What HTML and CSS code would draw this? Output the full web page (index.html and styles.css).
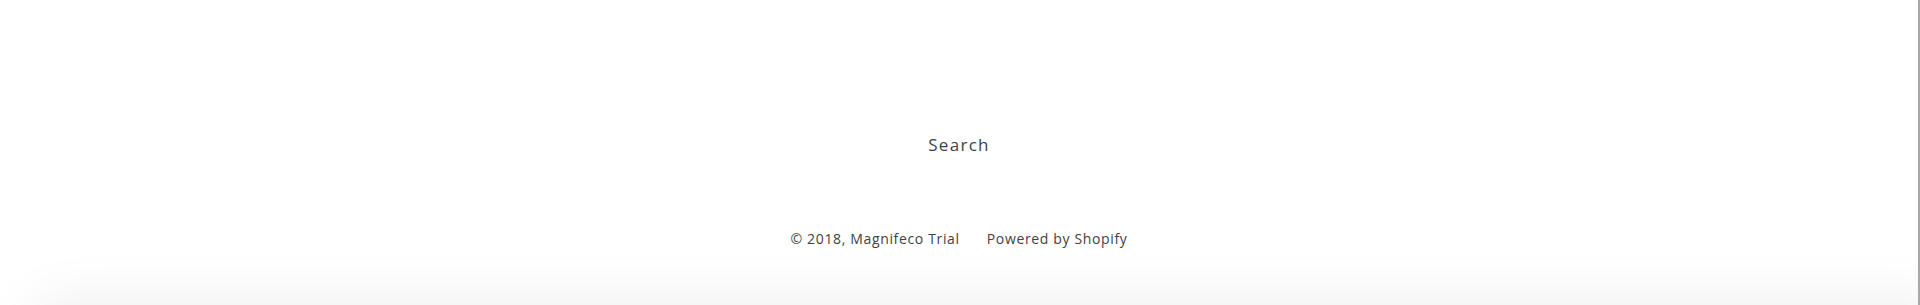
FILE: index.html
```html
<!DOCTYPE html>
<html>
<head>
    <title>Magnifeco Trial</title>
    <meta charset="UTF-8">
    <meta name="viewport" content="width=device-width, initial-scale=1.0">
    <link rel="stylesheet" href="styles.css">
</head>
<body>
    <div class="page">
        <footer class="site-footer">
            <ul class="footer-links">
                <li><a href="#">Search</a></li>
            </ul>
            <div class="footer-bottom">
                <small class="copyright">&copy; 2018, <a href="#">Magnifeco Trial</a></small>
                <small class="powered"><a href="#">Powered by Shopify</a></small>
            </div>
        </footer>
        <div class="bottom-shade"></div>
    </div>
</body>
</html>
```

FILE: styles.css
```css
* {
    box-sizing: border-box;
    margin: 0;
    padding: 0;
}

html, body {
    height: 100%;
}

body {
    font-family: 'Open Sans', 'Liberation Sans', sans-serif;
    color: #3d4246;
    background: #fff;
    overflow: hidden;
}

a {
    color: inherit;
    text-decoration: none;
}

.page {
    position: relative;
    height: 100%;
    border-right: 2px solid #a8a8a8;
    overflow: hidden;
}

.site-footer {
    padding-top: 133px;
    text-align: center;
}

.footer-links {
    list-style: none;
}

.footer-links a {
    font-size: 17px;
    letter-spacing: 1.3px;
    line-height: 24px;
}

.footer-bottom {
    display: flex;
    justify-content: center;
    gap: 27px;
    margin-top: 72px;
}

.footer-bottom small {
    font-size: 14px;
    letter-spacing: 0.65px;
    line-height: 20px;
}

.bottom-shade {
    position: absolute;
    left: 30px;
    right: -40px;
    top: 305px;
    height: 60px;
    box-shadow: 0 0 60px rgba(0, 0, 0, 0.08);
    border-radius: 40px;
}
```
